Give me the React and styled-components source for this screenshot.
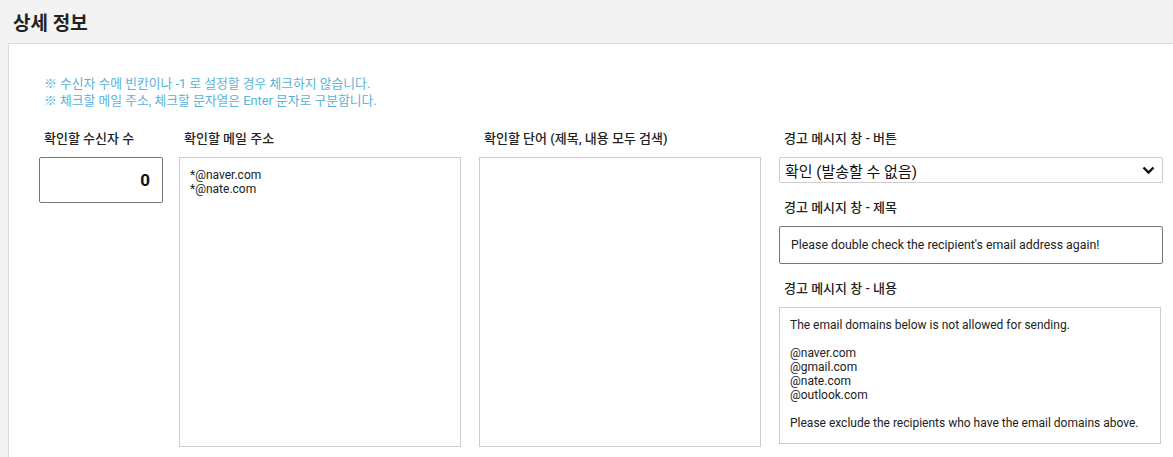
import React from 'react';
import styled, { createGlobalStyle } from 'styled-components';

const GlobalStyle = createGlobalStyle`
  body {
    margin: 0;
    background: #f3f3f3;
    font-family: Roboto, "Noto Sans CJK KR", sans-serif;
    color: #222;
  }
`;

const Header = styled.div`
  height: 43px;
  display: flex;
  align-items: center;
  padding-left: 13px;
  box-sizing: border-box;
  font-size: 19px;
  font-weight: bold;
  color: #222;
`;

const Panel = styled.div`
  margin-left: 8px;
  background: #fff;
  border-top: 1px solid #dcdcdc;
  border-left: 1px solid #dcdcdc;
  padding: 31px 0 20px 30px;
  min-height: 420px;
  box-sizing: border-box;
`;

const Notes = styled.div`
  padding-left: 5px;
  font-size: 12.8px;
  line-height: 17px;
  color: #5ab2d9;
`;

const Grid = styled.div`
  display: grid;
  grid-template-columns: 140px 300px 300px 384px;
  margin-top: 21px;
`;

const Column = styled.div`
  display: flex;
  flex-direction: column;
  width: ${p => p.$w}px;
`;

const Label = styled.div`
  padding-left: 5px;
  font-size: 13px;
  font-weight: 500;
  line-height: 18px;
  margin-bottom: 9px;
  margin-top: ${p => (p.$spaced ? '16px' : '0')};
`;

const NumberInput = styled.input`
  width: 124px;
  height: 46px;
  box-sizing: border-box;
  border: 1px solid #777;
  border-radius: 2px;
  padding: 0 12px;
  text-align: right;
  font-family: Roboto, sans-serif;
  font-size: 17px;
  font-weight: bold;
  color: #111;
  outline: none;
`;

const Area = styled.textarea`
  width: 100%;
  height: ${p => p.$h}px;
  box-sizing: border-box;
  border: 1px solid #ccc;
  padding: 10px;
  resize: none;
  font-family: Roboto, "Noto Sans CJK KR", sans-serif;
  font-size: 12px;
  line-height: 14px;
  color: #222;
  outline: none;
  overflow: hidden;
`;

const SelectBox = styled.div`
  position: relative;
  height: 26px;
  box-sizing: border-box;
  border: 1px solid #ccc;
  border-radius: 2px;
  display: flex;
  align-items: center;
  padding-left: 5px;
  font-size: 15px;
  color: #111;
`;

const Chevron = styled.svg`
  position: absolute;
  right: 7px;
  top: 7px;
`;

const TextInput = styled.input`
  height: 38px;
  box-sizing: border-box;
  border: 1px solid #777;
  border-radius: 2px;
  padding: 0 11px;
  font-family: Roboto, sans-serif;
  font-size: 12.35px;
  color: #222;
  outline: none;
`;

const warningBody = `The email domains below is not allowed for sending.

@naver.com
@gmail.com
@nate.com
@outlook.com

Please exclude the recipients who have the email domains above.`;

export default function App() {
  return (
    <>
      <GlobalStyle />
      <Header>상세 정보</Header>
      <Panel>
        <Notes>
          <div>※ 수신자 수에 빈칸이나 -1 로 설정할 경우 체크하지 않습니다.</div>
          <div>※ 체크할 메일 주소, 체크할 문자열은 Enter 문자로 구분합니다.</div>
        </Notes>
        <Grid>
          <Column $w={124}>
            <Label>확인할 수신자 수</Label>
            <NumberInput readOnly value="0" />
          </Column>
          <Column $w={282}>
            <Label>확인할 메일 주소</Label>
            <Area $h={290} readOnly value={'*@naver.com\n*@nate.com'} />
          </Column>
          <Column $w={282}>
            <Label>확인할 단어 (제목, 내용 모두 검색)</Label>
            <Area $h={290} readOnly value="" />
          </Column>
          <Column $w={384}>
            <Label>경고 메시지 창 - 버튼</Label>
            <SelectBox>
              확인 (발송할 수 없음)
              <Chevron width="13" height="10" viewBox="0 0 13 10">
                <path d="M1.5 2.5 L6.5 7.5 L11.5 2.5" fill="none" stroke="#111" strokeWidth="2.4" />
              </Chevron>
            </SelectBox>
            <Label $spaced>경고 메시지 창 - 제목</Label>
            <TextInput readOnly value="Please double check the recipient's email address again!" />
            <Label $spaced>경고 메시지 창 - 내용</Label>
            <Area $h={137} readOnly value={warningBody} style={{ width: 382 }} />
          </Column>
        </Grid>
      </Panel>
    </>
  );
}
